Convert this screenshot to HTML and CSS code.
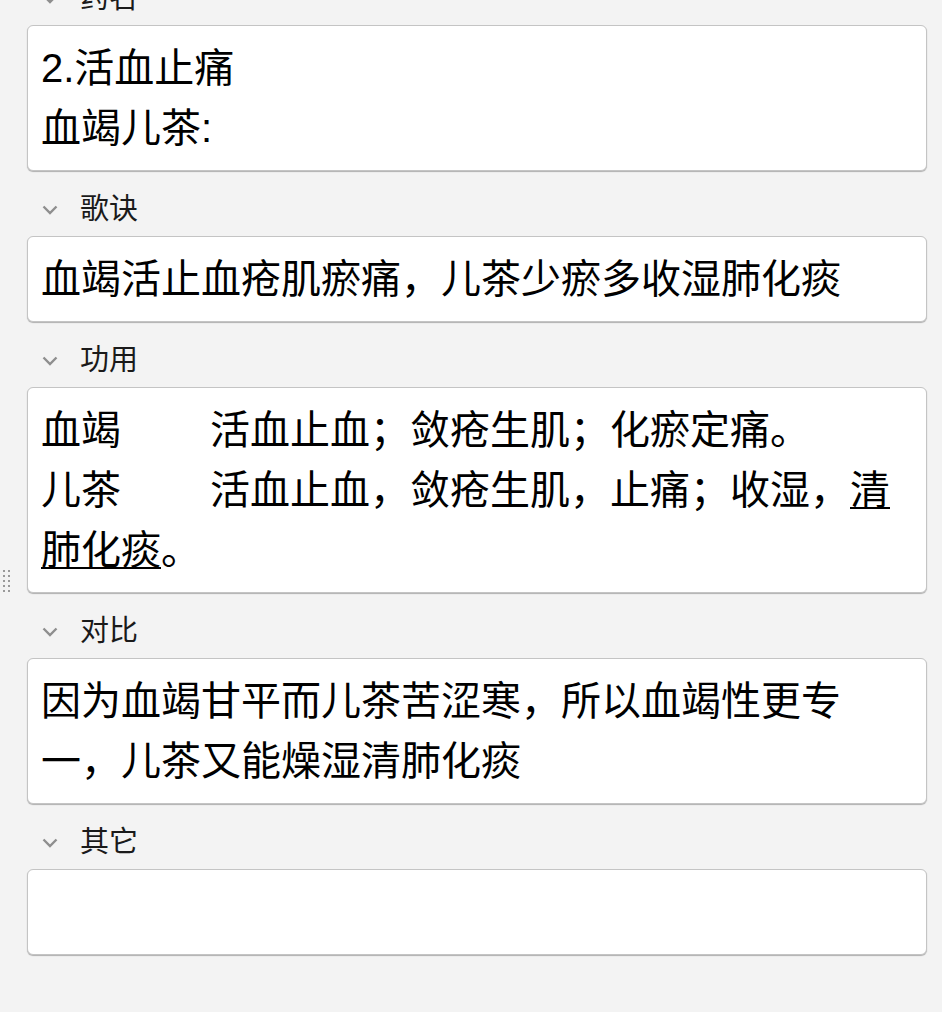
FILE: index.html
```html
<!DOCTYPE html>
<html lang="zh">
<head>
<meta charset="utf-8">
<title>Editor</title>
<link rel="stylesheet" href="styles.css">
</head>
<body>
<div class="fields">
  <div class="field">
    <div class="label-row">
      <svg class="chev" width="16" height="10" viewBox="0 0 16 10"><polyline points="1.5,1.5 8,8 14.5,1.5" fill="none" stroke="#8e8e8e" stroke-width="2.4"/></svg>
      <span class="label">药名</span>
    </div>
    <div class="box">2.活血止痛<br>血竭儿茶:</div>
  </div>
  <div class="field">
    <div class="label-row">
      <svg class="chev" width="16" height="10" viewBox="0 0 16 10"><polyline points="1.5,1.5 8,8 14.5,1.5" fill="none" stroke="#8e8e8e" stroke-width="2.4"/></svg>
      <span class="label">歌诀</span>
    </div>
    <div class="box">血竭活止血疮肌瘀痛，儿茶少瘀多收湿肺化痰</div>
  </div>
  <div class="field">
    <div class="label-row">
      <svg class="chev" width="16" height="10" viewBox="0 0 16 10"><polyline points="1.5,1.5 8,8 14.5,1.5" fill="none" stroke="#8e8e8e" stroke-width="2.4"/></svg>
      <span class="label">功用</span>
    </div>
    <div class="box">血竭<span class="tab"></span>活血止血；敛疮生肌；化瘀定痛。<br>儿茶<span class="tab"></span>活血止血，敛疮生肌，止痛；收湿，<u>清肺化痰</u>。</div>
  </div>
  <div class="field">
    <div class="label-row">
      <svg class="chev" width="16" height="10" viewBox="0 0 16 10"><polyline points="1.5,1.5 8,8 14.5,1.5" fill="none" stroke="#8e8e8e" stroke-width="2.4"/></svg>
      <span class="label">对比</span>
    </div>
    <div class="box">因为血竭甘平而儿茶苦涩寒，所以血竭性更专一，儿茶又能燥湿清肺化痰</div>
  </div>
  <div class="field">
    <div class="label-row">
      <svg class="chev" width="16" height="10" viewBox="0 0 16 10"><polyline points="1.5,1.5 8,8 14.5,1.5" fill="none" stroke="#8e8e8e" stroke-width="2.4"/></svg>
      <span class="label">其它</span>
    </div>
    <div class="box"><br></div>
  </div>
</div>
<div class="handle">
  <i></i><i></i><i></i><i></i><i></i><i></i><i></i><i></i><i></i><i></i>
</div>
</body>
</html>
```

FILE: styles.css
```css
html, body {
  margin: 0;
  padding: 0;
  background: #f3f3f3;
  height: 100%;
  overflow: hidden;
}
body {
  font-family: "Liberation Sans", "Noto Sans CJK SC", sans-serif;
  color: #000;
  position: relative;
}
.fields {
  margin: -22px 15px 0 27px;
  display: flex;
  flex-direction: column;
  gap: 18px;
}
.field {
  display: flex;
  flex-direction: column;
}
.label-row {
  height: 40px;
  display: flex;
  align-items: center;
  margin-bottom: 7px;
  padding-left: 15px;
}
.chev {
  display: block;
  margin-right: 22px;
  margin-top: 2px;
}
.label {
  font-size: 29px;
  line-height: 40px;
  color: #1a1a1a;
}
.box {
  background: #fff;
  border: 1px solid #c4c4c4;
  border-radius: 6px;
  box-shadow: 0 1px 1px rgba(0,0,0,0.28);
  padding: 12px 13px;
  font-size: 40px;
  line-height: 60px;
  min-height: 60px;
}
.tab {
  display: inline-block;
  width: 89px;
}
u {
  text-decoration-thickness: 2px;
  text-underline-offset: 3px;
}
.handle {
  position: absolute;
  left: 3px;
  top: 570px;
  display: grid;
  grid-template-columns: 2px 2px;
  column-gap: 3px;
  row-gap: 3px;
}
.handle i {
  display: block;
  width: 2px;
  height: 2px;
  background: #9a9a9a;
}
```
